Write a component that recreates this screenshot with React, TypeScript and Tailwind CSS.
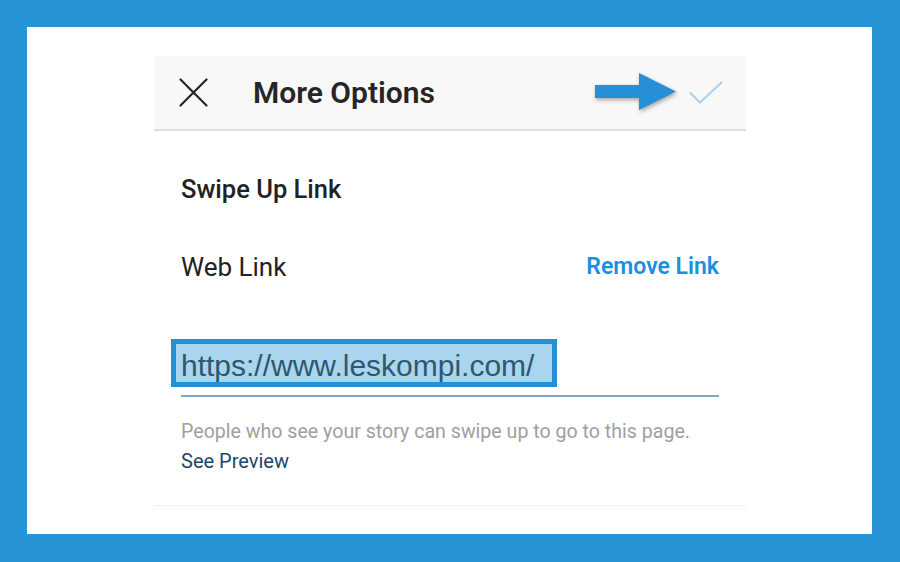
import React from "react";

const roboto = { fontFamily: "Roboto, 'Noto Sans', sans-serif" };

function CloseIcon() {
  return (
    <svg width="29" height="29" viewBox="0 0 29 29" className="shrink-0">
      <path d="M1.5 1.5 L27.5 27.5 M27.5 1.5 L1.5 27.5" stroke="#262626" strokeWidth="2.2" strokeLinecap="round" />
    </svg>
  );
}

function PointerArrow() {
  return (
    <svg width="84" height="42" viewBox="0 0 84 42" className="shrink-0 drop-shadow-[1px_2px_2px_rgba(0,0,0,0.35)]">
      <path d="M0 13 H44 V1 L81 19.5 L44 38 V26 H0 Z" fill="#2590d6" />
    </svg>
  );
}

function CheckIcon() {
  return (
    <svg width="34" height="23" viewBox="0 0 34 23" className="shrink-0">
      <path d="M1.5 12 L11 21.5 L32.5 1.5" fill="none" stroke="#a9d3ee" strokeWidth="2.2" strokeLinecap="round" strokeLinejoin="round" />
    </svg>
  );
}

export default function App() {
  return (
    <div className="w-[900px] h-[562px] bg-[#2794d6] p-[27px_28px_28px_27px]" style={roboto}>
      <div className="w-full h-full bg-white pt-[29px] pl-[127px] pr-[126px]">
        {/* Toolbar */}
        <div className="h-[75px] bg-[#f8f8f8] border-b-2 border-[#dedede] flex items-center pl-[25px] pr-[23px]">
          <CloseIcon />
          <span className="ml-[45px] text-[30px] font-semibold text-[#262626] leading-none">More Options</span>
          <div className="ml-auto flex items-center gap-[10px]">
            <PointerArrow />
            <CheckIcon />
          </div>
        </div>

        <div className="px-[27px]">
          <div className="mt-[43px] h-[30px] flex items-center text-[25.5px] font-medium text-[#222]">Swipe Up Link</div>

          <div className="mt-[48px] h-[30px] flex items-center justify-between">
            <span className="text-[26px] text-[#222]">Web Link</span>
            <span className="text-[23px] font-semibold text-[#1b8fe0]">Remove Link</span>
          </div>

          {/* highlighted url */}
          <div className="mt-[57px] -ml-[10px] w-[386px] h-[48px] border-[5px] border-[#2590d6] bg-[#aad5ee] flex items-end pb-[1px] pl-[5px]">
            <span className="text-[30px] text-[#2f5870] leading-none" style={{ fontFamily: "'Liberation Sans', Arial, sans-serif" }}>
              https://www.leskompi.com/
            </span>
          </div>

          <div className="mt-[8px] h-[2px] bg-[#7ea9c8]" />

          <p className="mt-[23px] h-[24px] flex items-center text-[19.6px] text-[#a0a0a0]">
            People who see your story can swipe up to go to this page.
          </p>
          <p className="mt-[5px] h-[24px] flex items-center text-[20px] text-[#1d4668]">See Preview</p>
        </div>

        <div className="mt-[32px] h-px bg-[#f0f0f0]" />
      </div>
    </div>
  );
}
